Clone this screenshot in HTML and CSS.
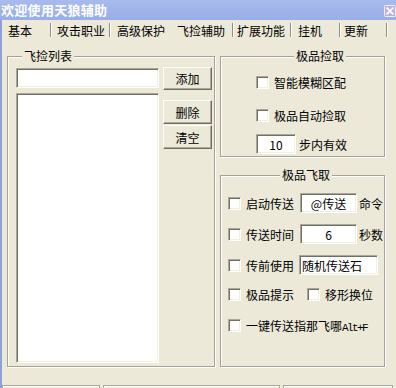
FILE: index.html
```html
<!DOCTYPE html>
<html lang="zh-CN">
<head>
<meta charset="utf-8">
<title>欢迎使用天狼辅助</title>
<link rel="stylesheet" href="styles.css">
</head>
<body>
<div class="window">
  <div class="titlebar">
    <span class="title">欢迎使用天狼辅助</span>
    <svg class="close" width="12" height="12" viewBox="0 0 12 12">
      <rect x="0.5" y="0.5" width="11" height="11" rx="1" fill="#bdaee9" stroke="#eef0fb"/>
      <path d="M3.2 3.2 L8.8 8.8 M8.8 3.2 L3.2 8.8" stroke="#fff" stroke-width="1.8" stroke-linecap="square"/>
    </svg>
  </div>
  <div class="main">
    <div class="tabs">
      <div class="tab t1">基本</div>
      <div class="tab t2">攻击职业</div>
      <div class="tab t3 no-sep">高级保护</div>
      <div class="tab t4 active">飞捡辅助</div>
      <div class="tab t5">扩展功能</div>
      <div class="tab t6">挂机</div>
      <div class="tab t7">更新</div>
    </div>
    <div class="panel">
      <fieldset class="group group-list">
        <legend>飞捡列表</legend>
        <div class="list-layout">
          <div class="list-col">
            <input class="field name-field" type="text" value="">
            <div class="listbox"></div>
          </div>
          <div class="btn-col">
            <button class="btn btn-add">添加</button>
            <button class="btn btn-del">删除</button>
            <button class="btn btn-clear">清空</button>
          </div>
        </div>
      </fieldset>
      <div class="right-col">
        <fieldset class="group group-pick centered">
          <legend>极品捡取</legend>
          <label class="opt"><input type="checkbox" class="cb"><span class="lbl">智能模糊区配</span></label>
          <label class="opt opt2"><input type="checkbox" class="cb"><span class="lbl">极品自动捡取</span></label>
          <div class="opt opt3"><input class="field steps" type="text" value="10"><span class="after">步内有效</span></div>
        </fieldset>
        <fieldset class="group group-fly centered">
          <legend>极品飞取</legend>
          <div class="frow">
            <input type="checkbox" class="cb"><span class="lbl w48">启动传送</span>
            <input class="field mid" type="text" value="@传送"><span class="suffix">命令</span>
          </div>
          <div class="frow">
            <input type="checkbox" class="cb"><span class="lbl w48">传送时间</span>
            <input class="field mid" type="text" value="6"><span class="suffix">秒数</span>
          </div>
          <div class="frow">
            <input type="checkbox" class="cb"><span class="lbl w48">传前使用</span>
            <input class="field wide" type="text" value="随机传送石">
          </div>
          <div class="frow frow4">
            <input type="checkbox" class="cb"><span class="lbl w48">极品提示</span>
            <input type="checkbox" class="cb cb-second"><span class="lbl">移形换位</span>
          </div>
          <div class="frow">
            <input type="checkbox" class="cb"><span class="lbl">一键传送指那飞哪<span class="mono">Alt+F</span></span>
          </div>
        </fieldset>
      </div>
    </div>
    <div class="status">
      <div class="sp sp1"></div>
      <div class="sp sp2"></div>
      <div class="sp sp3"></div>
    </div>
  </div>
</div>
</body>
</html>
```
FILE: styles.css
```css
html, body {
  margin: 0;
  padding: 0;
}
body {
  width: 396px;
  height: 388px;
  overflow: hidden;
  background: #ece9d8;
  font: 12px "Noto Sans CJK SC", "Noto Sans", sans-serif;
  color: #000;
}
.window {
  display: flex;
  flex-direction: column;
  height: 388px;
}
.titlebar {
  height: 20px;
  flex: none;
  display: flex;
  align-items: center;
  justify-content: space-between;
  background: linear-gradient(#a9bbee, #98aee8);
  color: #fff;
}
.title {
  font-weight: bold;
  font-size: 13px;
  line-height: 20px;
  padding-left: 1px;
  letter-spacing: 0.3px;
}
.close {
  display: block;
  margin-top: 2px;
}
.main {
  flex: 1;
  display: flex;
  flex-direction: column;
  border-left: 2px solid #8da2dc;
  min-height: 0;
}
.tabs {
  height: 18px;
  flex: none;
  box-sizing: border-box;
  padding-top: 3px;
  display: flex;
}
.tab {
  height: 14px;
  line-height: 15px;
  box-sizing: border-box;
  border-right: 1px solid #8f8d84;
  box-shadow: 1px 0 0 #fff;
  white-space: nowrap;
}
.t1 { width: 49px; padding-left: 6px; }
.t2 { width: 59px; padding-left: 6px; }
.t3 { width: 59px; padding-left: 7px; }
.t4 { width: 64px; padding-left: 8px; }
.t5 { width: 58px; padding-left: 4px; }
.t6 { width: 49px; padding-left: 7px; }
.t7 { width: 47px; padding-left: 4px; }
.tab.no-sep {
  border-right-color: transparent;
  box-shadow: none;
}
.panel {
  height: 347px;
  flex: none;
  box-sizing: border-box;
  display: flex;
  align-items: flex-start;
  padding: 11px 0 0 5px;
}
.group {
  margin: 0;
  padding: 0;
  min-width: 0;
  box-sizing: border-box;
  border: 1px solid #a5a294;
  box-shadow: inset 1px 1px 0 #fff, 1px 1px 0 #fff;
}
.group legend {
  padding: 0 2px;
  margin-left: 6px;
  height: 14px;
  line-height: 14px;
  background: #ece9d8;
}
.group.centered legend {
  margin-left: auto;
  margin-right: auto;
}
.group-list {
  width: 208px;
  height: 318px;
  padding: 5px 0 0 8px;
}
.list-layout {
  display: flex;
  align-items: flex-start;
}
.list-col {
  width: 143px;
  display: flex;
  flex-direction: column;
  gap: 5px;
}
.field,
.listbox {
  -webkit-appearance: none;
  appearance: none;
  box-sizing: border-box;
  margin: 0;
  background: #fff;
  border: 1px solid;
  border-color: #aca899 #fff #fff #aca899;
  box-shadow: inset 1px 1px 0 #716f64, inset -1px -1px 0 #f1efe2;
  font: inherit;
  color: #000;
  outline: none;
}
.field {
  height: 20px;
  padding: 0 2px;
  text-align: center;
}
.name-field {
  width: 143px;
}
.listbox {
  height: 270px;
}
.btn-col {
  width: 49px;
  margin-left: 4px;
  margin-top: -1px;
  display: flex;
  flex-direction: column;
}
.btn {
  margin: 0;
  padding: 0;
  box-sizing: border-box;
  height: 23px;
  background: #ece9d8;
  font: inherit;
  color: #000;
  border: 1px solid;
  border-color: #fff #716f64 #716f64 #fff;
  box-shadow: inset -1px -1px 0 #aca899;
}
.btn-del {
  margin-top: 10px;
  height: 24px;
}
.btn-clear {
  margin-top: 1px;
  height: 24px;
}
.right-col {
  width: 165px;
  margin-left: 5px;
  display: flex;
  flex-direction: column;
}
.group-pick {
  height: 108px;
  padding: 13px 0 0 35px;
}
.opt {
  display: flex;
  align-items: center;
  height: 13px;
  white-space: nowrap;
}
.opt2 {
  margin-top: 20px;
}
.opt3 {
  margin-top: 12px;
  height: 20px;
}
.cb {
  -webkit-appearance: none;
  appearance: none;
  width: 13px;
  height: 13px;
  margin: 0;
  flex: none;
  box-sizing: border-box;
  background: #fff;
  border: 1px solid;
  border-color: #aca899 #fff #fff #aca899;
  box-shadow: inset 1px 1px 0 #716f64, inset -1px -1px 0 #f1efe2;
}
.lbl {
  margin-left: 5px;
  white-space: nowrap;
}
.steps {
  width: 40px;
}
.after {
  margin-left: 3px;
}
.group-fly {
  height: 199px;
  margin-top: 11px;
  padding: 11px 0 0 7px;
}
.frow {
  display: flex;
  align-items: center;
  height: 20px;
  margin-top: 11px;
  white-space: nowrap;
}
.frow:first-of-type {
  margin-top: 0;
}
.frow4 {
  margin-top: 9px;
}
.w48 {
  width: 48px;
  flex: none;
}
.mid {
  width: 57px;
  margin-left: 6px;
}
.wide {
  width: 79px;
  margin-left: 5px;
  text-align: left;
}
.suffix {
  margin-left: 2px;
}
.cb-second {
  margin-left: 13px;
}
.mono {
  font-family: "Liberation Mono", monospace;
  font-size: 11px;
  letter-spacing: -1.6px;
}
.status {
  height: 3px;
  flex: none;
  display: flex;
  gap: 3px;
  overflow: hidden;
}
.sp {
  height: 6px;
  box-sizing: border-box;
  border: 1px solid #aca899;
  box-shadow: inset 1px 1px 0 #fff;
}
.sp1 { width: 98px; }
.sp2 { width: 177px; }
.sp3 { width: 110px; }
```
